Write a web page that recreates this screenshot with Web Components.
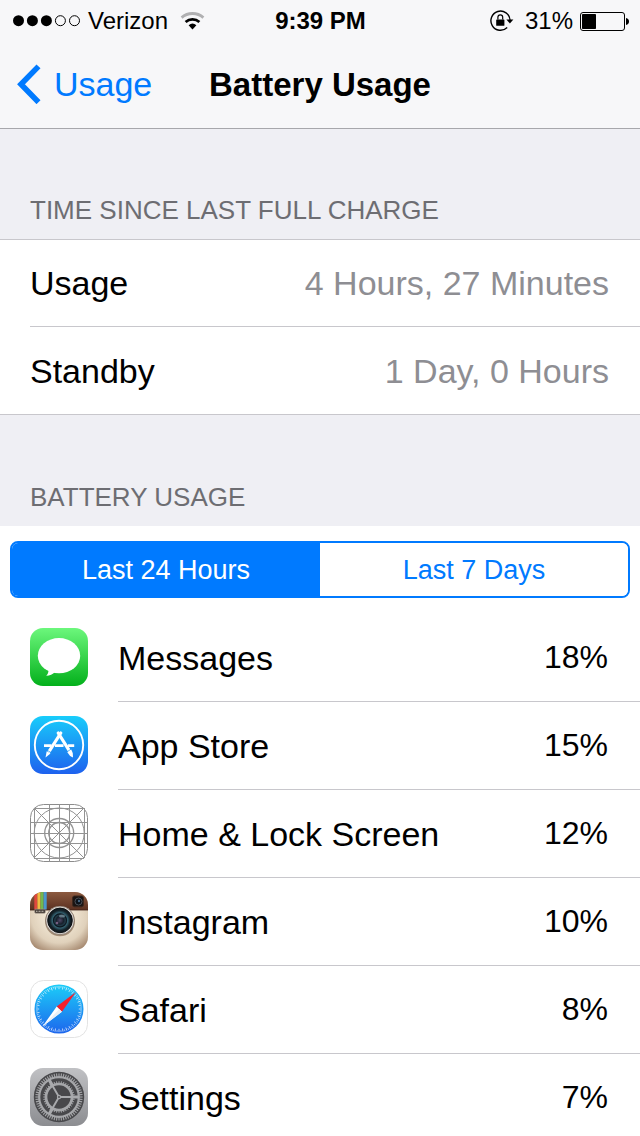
<!DOCTYPE html>
<html lang="en">
<head>
<meta charset="utf-8">
<meta name="viewport" content="width=device-width, initial-scale=1">
<title>Battery Usage</title>
<style>
  body {
    margin: 0;
    background: #efeff4;
    color: #000;
    font-family: "Liberation Sans", Arial, sans-serif;
    font-size: 34px;
    line-height: 40px;
  }
</style>
</head>
<body>
<settings-screen>
  <status-bar slot="top" carrier="Verizon" time="9:39 PM" battery="31"></status-bar>
  <nav-bar slot="top" back="Usage">Battery Usage</nav-bar>

  <settings-group label="TIME SINCE LAST FULL CHARGE">
    <info-row value="4 Hours, 27 Minutes">Usage</info-row>
    <info-row value="1 Day, 0 Hours">Standby</info-row>
  </settings-group>

  <settings-group label="BATTERY USAGE" plain>
    <segmented-control options="Last 24 Hours|Last 7 Days"></segmented-control>
    <app-row icon="messages" percent="18">Messages</app-row>
    <app-row icon="appstore" percent="15">App Store</app-row>
    <app-row icon="home" percent="12">Home &amp; Lock Screen</app-row>
    <app-row icon="instagram" percent="10">Instagram</app-row>
    <app-row icon="safari" percent="8">Safari</app-row>
    <app-row icon="settings" percent="7">Settings</app-row>
  </settings-group>
</settings-screen>

<script>
class SettingsScreen extends HTMLElement {
  constructor() {
    super();
    this.attachShadow({ mode: 'open' });
    this.shadowRoot.innerHTML = `
      <style>
        :host {
          display: flex;
          flex-direction: column;
          height: 100vh;
        }
        header {
          flex: none;
          background: #f7f7f9;
          border-bottom: 1px solid #a7a7ac;
        }
        main {
          flex: 1;
          min-height: 0;
          overflow-y: auto;
          scrollbar-width: none;
        }
      </style>
      <header><slot name="top"></slot></header>
      <main><slot></slot></main>
    `;
  }
}

class StatusBar extends HTMLElement {
  constructor() {
    super();
    this.attachShadow({ mode: 'open' });
    this.render();
  }

  render() {
    const battery = Number(this.getAttribute('battery'));
    this.shadowRoot.innerHTML = `
      <style>
        :host {
          display: grid;
          grid-template-columns: 1fr auto 1fr;
          align-items: center;
          box-sizing: border-box;
          height: 40px;
          padding: 2px 11px 0 12px;
          font-size: 24px;
          line-height: 28px;
        }
        div {
          display: flex;
          align-items: center;
        }
        .right {
          justify-content: flex-end;
        }
        .wifi {
          margin-left: 12px;
        }
        .lock {
          margin-right: 11px;
        }
        .battery {
          margin-left: 7px;
        }
        .signal {
          margin-right: 7px;
        }
        svg {
          display: block;
          flex: none;
        }
      </style>
      <div>
        <svg class="signal" width="69" height="12" viewBox="0 0 69 12">
          <circle cx="6.5" cy="5.7" r="5.5"/>
          <circle cx="20.4" cy="5.7" r="5.5"/>
          <circle cx="34.4" cy="5.7" r="5.5"/>
          <circle cx="48.4" cy="5.7" r="5" fill="none" stroke="#000"/>
          <circle cx="62.5" cy="5.7" r="5" fill="none" stroke="#000"/>
        </svg>
        <span>${this.getAttribute('carrier')}</span>
        <svg class="wifi" width="26" height="20" viewBox="0 0 26 20">
          <path d="M1.6 6.6a16.6 16.6 0 0 1 21.8 0" fill="none" stroke="#b0b0b2" stroke-width="2.8"/>
          <path d="M5.6 11a10.6 10.6 0 0 1 13.8 0" fill="none" stroke="#000" stroke-width="2.8"/>
          <path d="M8.6 14.2a6 6 0 0 1 7.8 0l-3.9 4.4z"/>
        </svg>
      </div>
      <b>${this.getAttribute('time')}</b>
      <div class="right">
        <svg class="lock" width="24" height="22" viewBox="0 0 24 22">
          <path d="M17.2 17.6a9.6 9.6 0 1 1 2.9-7.4" fill="none" stroke="#000" stroke-width="1.4"/>
          <path d="M16.4 9.4h7l-3.5 4.2z"/>
          <rect x="6.2" y="9.4" width="8.2" height="6.4" rx=".6"/>
          <path d="M7.9 9.6V7.2a2.4 2.4 0 0 1 4.8 0v2.4" fill="none" stroke="#000" stroke-width="1.2"/>
        </svg>
        <span>${battery}%</span>
        <svg class="battery" width="49" height="19" viewBox="0 0 49 19">
          <rect x=".5" y=".5" width="44" height="18" rx="2.5" fill="none" stroke="#000"/>
          <rect x="2" y="2" width="${Math.round(battery * 0.45)}" height="15" rx=".8"/>
          <path d="M46 6q3 .6 3 3.5t-3 3.5z"/>
        </svg>
      </div>
    `;
  }
}

class NavBar extends HTMLElement {
  constructor() {
    super();
    this.attachShadow({ mode: 'open' });
    this.shadowRoot.innerHTML = `
      <style>
        :host {
          display: grid;
          grid-template-columns: 1fr auto 1fr;
          align-items: center;
          height: 88px;
          padding: 0 16px;
        }
        a {
          display: flex;
          align-items: center;
          gap: 12px;
          color: #007aff;
          text-decoration: none;
        }
        h1 {
          margin: 0;
          padding-top: 2px;
          font-size: 33px;
          font-weight: bold;
        }
        svg {
          display: block;
        }
      </style>
      <a href="#usage">
        <svg width="26" height="40" viewBox="0 0 26 40">
          <path d="M22.500 2.400 5 20.300l17.500 17.900" fill="none" stroke="currentColor" stroke-width="5.600"/>
        </svg>
        <span>${this.getAttribute('back')}</span>
      </a>
      <h1><slot></slot></h1>
    `;
  }
}

class SettingsGroup extends HTMLElement {
  constructor() {
    super();
    this.attachShadow({ mode: 'open' });
    this.shadowRoot.innerHTML = `
      <style>
        :host {
          display: block;
        }
        h2 {
          display: flex;
          align-items: flex-end;
          box-sizing: border-box;
          height: 110px;
          margin: 0;
          padding: 0 30px 14px;
          color: #6d6d72;
          font-size: 26px;
          font-weight: normal;
          line-height: 30px;
        }
        .rows {
          background: #fff;
          border-top: 1px solid #c8c7cc;
          border-bottom: 1px solid #c8c7cc;
        }
        :host([plain]) h2 {
          height: 111px;
        }
        :host([plain]) .rows {
          border-top: none;
        }
      </style>
      <section>
        <h2>${this.getAttribute('label')}</h2>
        <div class="rows"><slot></slot></div>
      </section>
    `;
  }
}

class InfoRow extends HTMLElement {
  constructor() {
    super();
    this.attachShadow({ mode: 'open' });
    this.shadowRoot.innerHTML = `
      <style>
        :host {
          display: flex;
          justify-content: space-between;
          align-items: center;
          box-sizing: border-box;
          height: 87px;
          margin-left: 30px;
          padding-right: 31px;
          border-bottom: 1px solid #c8c7cc;
        }
        :host(:last-child) {
          border-bottom: none;
        }
        .value {
          color: #8e8e93;
        }
      </style>
      <span><slot></slot></span>
      <span class="value">${this.getAttribute('value')}</span>
    `;
  }
}

class SegmentedControl extends HTMLElement {
  constructor() {
    super();
    this.attachShadow({ mode: 'open' });
    this.render();
  }

  render() {
    const options = this.getAttribute('options').split('|');
    this.shadowRoot.innerHTML = `
      <style>
        :host {
          display: block;
          padding: 15px 10px 16px;
        }
        div {
          display: flex;
          box-sizing: border-box;
          height: 57px;
          border: 2px solid #007aff;
          border-radius: 8px;
          overflow: hidden;
        }
        button {
          flex: 1;
          margin: 0;
          padding: 0;
          border: none;
          background: #fff;
          color: #007aff;
          font-family: inherit;
          font-size: 27px;
          line-height: 30px;
        }
        button[aria-pressed="true"] {
          background: #007aff;
          color: #fff;
        }
      </style>
      <div role="group">
        ${options.map((text, i) => `<button type="button" aria-pressed="${i === 0}">${text}</button>`).join('')}
      </div>
    `;

    const buttons = this.shadowRoot.querySelectorAll('button');
    buttons.forEach((button) => {
      button.addEventListener('click', () => {
        buttons.forEach((b) => b.setAttribute('aria-pressed', b === button));
      });
    });
  }
}

class AppRow extends HTMLElement {
  constructor() {
    super();
    this.attachShadow({ mode: 'open' });
    this.shadowRoot.innerHTML = `
      <style>
        :host {
          display: flex;
          gap: 30px;
          height: 88px;
          padding-left: 30px;
        }
        app-icon {
          margin-top: 14px;
        }
        .line {
          flex: 1;
          display: flex;
          justify-content: space-between;
          align-items: center;
          padding-right: 32px;
          border-bottom: 1px solid #c8c7cc;
        }
        :host(:last-child) .line {
          border-bottom: none;
        }
        .percent {
          padding-bottom: 2px;
          font-size: 32px;
        }
      </style>
      <app-icon name="${this.getAttribute('icon')}"></app-icon>
      <div class="line">
        <span><slot></slot></span>
        <span class="percent">${this.getAttribute('percent')}%</span>
      </div>
    `;
  }
}

// Short lines spread round a circle, for the compass and the gear
function ticks(count, cx, cy, from, to, attrs) {
  let out = '';
  for (let i = 0; i < count; i++) {
    out += `<path d="M${cx} ${cy - from}V${cy - to}" transform="rotate(${(360 / count) * i} ${cx} ${cy})" ${attrs}/>`;
  }
  return out;
}

const ICONS = {
  messages: `
    <linearGradient id="bg" x2="0" y2="1">
      <stop offset="0" stop-color="#6cf77c"/>
      <stop offset="1" stop-color="#03b01b"/>
    </linearGradient>
    <rect width="58" height="58" rx="13" fill="url(#bg)"/>
    <ellipse cx="29" cy="27.700" rx="21.200" ry="17.600" fill="#fff"/>
    <path d="M18.500 41c.2 3-.6 5.200-2.300 6.700 3.500-.1 6.600-1.500 9-4z" fill="#fff"/>`,

  appstore: `
    <linearGradient id="bg" x2="0" y2="1">
      <stop offset="0" stop-color="#18cdfb"/>
      <stop offset="1" stop-color="#1e61ee"/>
    </linearGradient>
    <rect width="58" height="58" rx="13" fill="url(#bg)"/>
    <circle cx="29" cy="29" r="24.200" fill="none" stroke="#fff" stroke-width="1.900"/>
    <g fill="none" stroke="#fff">
      <path d="M14 29.700h7.500M25 29.700h8.500M38 29.700h6.200" stroke-width="2.700"/>
      <path d="M30.800 17 19.300 35.200" stroke-width="3.200" stroke-linecap="round"/>
      <path d="M28.200 17 39.300 34.600" stroke-width="3.200" stroke-linecap="round"/>
    </g>
    <path d="m16.700 35.200 3.800 2.400-5 4z" fill="#fff"/>
    <path d="m37.300 36.200 3.900-2.700q2.600 4 1.800 7.900-3.600-1.200-5.700-5.200z" fill="#fff"/>
    <path d="m17.200 34.200 4 2.500M37.300 35.600l3.800-2.500" stroke="#26a0f6" stroke-width=".8"/>`,

  home: `
    <rect x=".5" y=".5" width="57" height="57" rx="13" fill="#fff" stroke="#8c8c8c"/>
    <g fill="none" stroke="#939393">
      <path d="M4.500 4v50M19.500 0v58M29.500 0v58M39.500 0v58M54.500 4v50"/>
      <path d="M4 4.500h50M0 18.500h58M0 29.500h58M0 39.500h58M4 54.500h50"/>
      <path d="m4 4 50 50M54 4 4 54"/>
      <circle cx="29.200" cy="29" r="25"/>
      <circle cx="29.200" cy="29" r="14.500" stroke-width="1.300"/>
      <circle cx="29.200" cy="29" r="10.500" stroke-width="1.300"/>
    </g>`,

  instagram: `
    <linearGradient id="top" x2="0" y2="1">
      <stop offset="0" stop-color="#8c5a40"/>
      <stop offset="1" stop-color="#5b3020"/>
    </linearGradient>
    <radialGradient id="body" cx=".5" cy=".4" r=".8">
      <stop offset="0" stop-color="#fff8e8"/>
      <stop offset=".6" stop-color="#e0d1bb"/>
      <stop offset="1" stop-color="#876348"/>
    </radialGradient>
    <radialGradient id="lens">
      <stop offset="0" stop-color="#504866"/>
      <stop offset=".3" stop-color="#17202c"/>
      <stop offset=".62" stop-color="#33606f"/>
      <stop offset=".82" stop-color="#142229"/>
      <stop offset="1" stop-color="#10171c"/>
    </radialGradient>
    <clipPath id="clip"><rect width="58" height="58" rx="13"/></clipPath>
    <g clip-path="url(#clip)">
      <rect width="58" height="58" fill="url(#body)"/>
      <rect width="58" height="18" fill="url(#top)"/>
      <path d="M0 18h58" stroke="#3d2015" stroke-width=".8"/>
      <path d="M4.300 0h3.100v17.500H4.300z" fill="#e0473d"/>
      <path d="M7.400 0h3.100v17.500H7.400z" fill="#eebb42"/>
      <path d="M10.500 0h3.100v17.500h-3.100z" fill="#72b94e"/>
      <path d="M13.600 0h3.100v17.500h-3.100z" fill="#4998cf"/>
    </g>
    <rect x="4.700" y="17.200" width="10.600" height="4" rx="1" fill="#3f3732" stroke="#aca196" stroke-width=".6"/>
    <path d="M6 19.200h8" stroke="#d0c8bd" stroke-width="1.100" stroke-dasharray="1 .5"/>
    <rect x="42.600" y="4" width="10.800" height="10.800" rx="1.800" fill="#1a1412" stroke="#3d281e"/>
    <circle cx="48.500" cy="9.500" r="3.500" fill="#0b1118" stroke="#4b5057"/>
    <circle cx="49" cy="9" r="1.200" fill="#456580"/>
    <circle cx="30" cy="29.300" r="15" fill="#77583f" opacity=".6"/>
    <circle cx="30" cy="28.400" r="14.300" fill="#d8d3ce" stroke="#574538" stroke-width=".5"/>
    <circle cx="30" cy="28.400" r="12.300" fill="url(#lens)" stroke="#0d1114"/>
    <circle cx="30" cy="28.400" r="6.500" fill="none" stroke="#0d1820" stroke-width="1.200"/>
    <ellipse cx="32" cy="24" rx="3" ry="1.600" fill="#a8c4cf" opacity=".5"/>
    <circle cx="27" cy="31" r="1.300" fill="#765d80"/>`,

  safari: `
    <linearGradient id="bg" x2="0" y2="1">
      <stop offset="0" stop-color="#1ccdf8"/>
      <stop offset="1" stop-color="#1d66ed"/>
    </linearGradient>
    <rect x=".5" y=".5" width="57" height="57" rx="13" fill="#fff" stroke="#e3e3e3"/>
    <circle cx="29" cy="29" r="24.500" fill="url(#bg)"/>
    ${ticks(36, 29, 29, 23, 19.8, 'stroke="#fff" stroke-width=".8" opacity=".8"')}
    <g transform="rotate(5 29 29)">${ticks(36, 29, 29, 23, 21.3, 'stroke="#fff" stroke-width=".8" opacity=".7"')}</g>
    <path d="M46 12 26.700 26.400l5.200 5.400z" fill="#f5202c"/>
    <path d="m12.500 46.500 14.200-20.100 5.200 5.400z" fill="#fff"/>
    <path d="m12.500 46.500 16.800-17.400 2.600 2.700z" fill="#eaf0f6"/>`,

  settings: `
    <linearGradient id="bg" x2="0" y2="1">
      <stop offset="0" stop-color="#c0c1c4"/>
      <stop offset="1" stop-color="#8c8d91"/>
    </linearGradient>
    <rect width="58" height="58" rx="13" fill="url(#bg)"/>
    <circle cx="29" cy="29" r="25.200" fill="#48484b"/>
    ${ticks(60, 29, 29, 23.6, 20, 'stroke="#a5a6a9" stroke-width="1.1"')}
    <circle cx="29" cy="29" r="19.800" fill="none" stroke="#a5a6a9" stroke-width="2.200"/>
    <circle cx="29" cy="29" r="13" fill="none" stroke="#a5a6a9" stroke-width="2.700"/>
    ${ticks(40, 29, 29, 15.8, 13.8, 'stroke="#a5a6a9" stroke-width=".9"')}
    <g fill="none" stroke="#a9aaad">
      <path d="M29 29h20M29 29 19 11.700M29 29 19 46.300" stroke-width="1.900"/>
      <path d="M42 29h6M22.500 17.700l-3-5.200M22.500 40.300l-3 5.200" stroke-width="3.200"/>
    </g>
    <circle cx="29" cy="29" r="2.200" fill="#a9aaad"/>
    <circle cx="29" cy="29" r=".9" fill="#48484b"/>`
};

class AppIcon extends HTMLElement {
  constructor() {
    super();
    this.attachShadow({ mode: 'open' });
  }

  connectedCallback() {
    this.shadowRoot.innerHTML = `
      <style>
        :host {
          display: block;
          flex: none;
          width: 58px;
          height: 58px;
        }
        svg {
          display: block;
        }
      </style>
      <svg width="58" height="58" viewBox="0 0 58 58" aria-hidden="true">${ICONS[this.getAttribute('name')]}</svg>
    `;
  }
}

customElements.define('app-icon', AppIcon);
customElements.define('app-row', AppRow);
customElements.define('segmented-control', SegmentedControl);
customElements.define('info-row', InfoRow);
customElements.define('settings-group', SettingsGroup);
customElements.define('nav-bar', NavBar);
customElements.define('status-bar', StatusBar);
customElements.define('settings-screen', SettingsScreen);
</script>
</body>
</html>
